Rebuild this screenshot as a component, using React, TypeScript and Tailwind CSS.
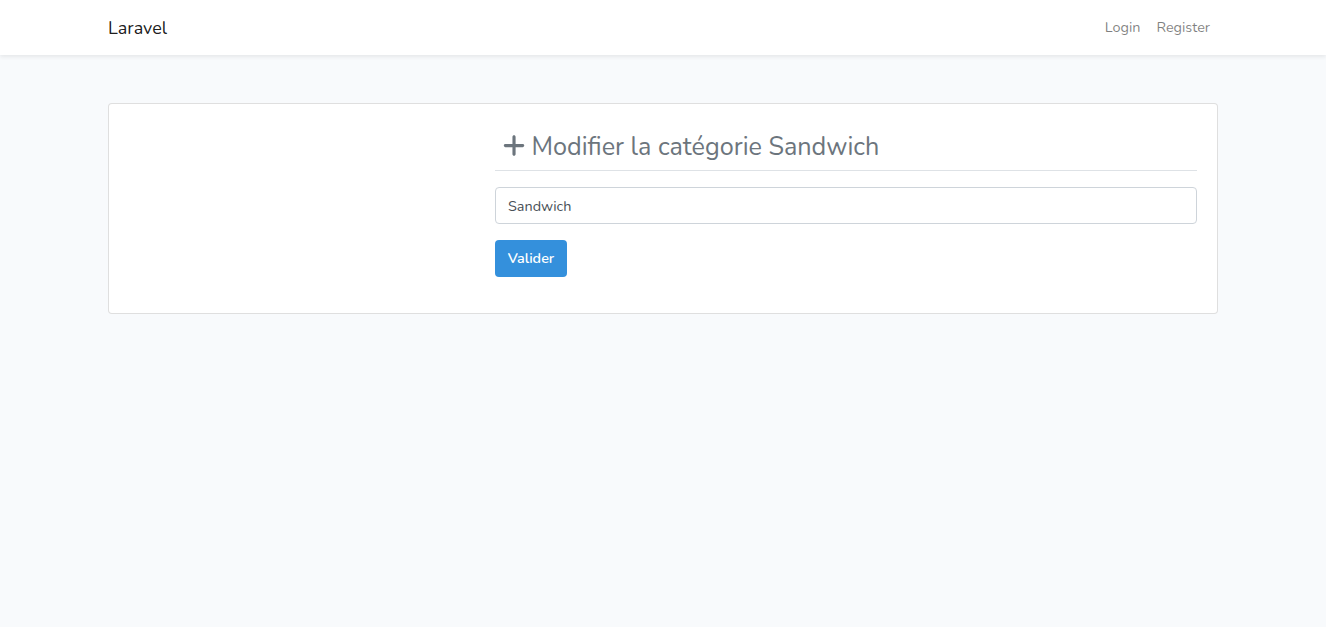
import React from "react";
import { FaPlus } from "react-icons/fa6";

export default function App() {
  return (
    <div className="min-h-screen bg-[#f8fafc] font-['Nunito','Open_Sans',sans-serif] text-[14.4px] leading-[1.6] text-[#212529]">
      <nav className="h-[55px] bg-white shadow-[0_2px_4px_rgba(0,0,0,0.075)]">
        <div className="mx-auto flex h-full w-[1110px] items-center justify-between">
          <a className="pt-px text-[18px] text-black/90">Laravel</a>
          <div className="flex gap-4 pr-2 text-black/50">
            <a>Login</a>
            <a>Register</a>
          </div>
        </div>
      </nav>
      <main className="pt-12">
        <div className="mx-auto flex h-[211px] w-[1110px] justify-end rounded border border-black/[0.125] bg-white px-5 pt-5">
          <form className="w-[702px]">
            <h1 className="flex h-[47px] items-center border-b border-[#dee2e6] pl-2 text-[25.2px] text-[#6c757d]">
              <FaPlus className="mr-[6.5px] mb-0.5 h-[25.2px] w-[22.05px]" />
              <span className="whitespace-nowrap">Modifier la catégorie Sandwich</span>
            </h1>
            <input
              defaultValue="Sandwich"
              className="mt-4 block h-[37px] w-full rounded border border-[#ced4da] bg-white px-3 text-[#495057]"
            />
            <button type="button" className="mt-4 block h-[37px] w-[72px] rounded bg-[#3490dc] font-semibold text-white">
              Valider
            </button>
          </form>
        </div>
      </main>
    </div>
  );
}
